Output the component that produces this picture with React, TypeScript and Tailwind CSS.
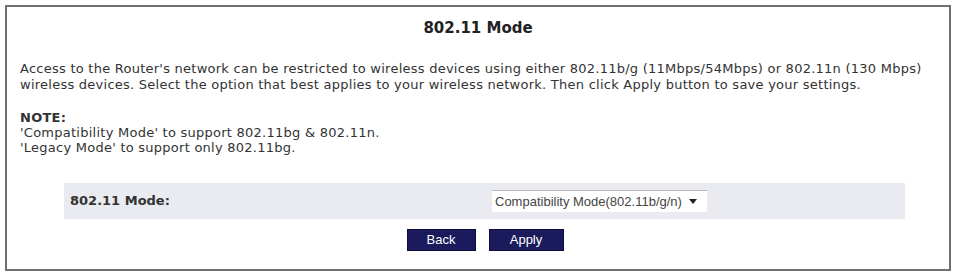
import React from "react";

const Page = () => {
  return (
    <div className="w-[956px] h-[273px] bg-white p-[5px] font-['DejaVu_Sans',Verdana,sans-serif] text-[#333]">
      <div className="h-[266px] border-2 border-[#707070] px-[13px]">
        {/* Title */}
        <h1 className="text-center font-bold text-[15px] leading-[18px] pt-[12px] text-[#222]">
          802.11 Mode
        </h1>

        {/* Description */}
        <p className="mt-[24px] text-[13px] leading-[16px] tracking-[0.25px]">
          Access to the Router's network can be restricted to wireless devices using either 802.11b/g (11Mbps/54Mbps) or 802.11n (130 Mbps)
          wireless devices. Select the option that best applies to your wireless network. Then click Apply button to save your settings.
        </p>

        {/* Note */}
        <div className="mt-[17px] text-[13px] leading-[15px] tracking-[0.25px]">
          <p className="font-bold">NOTE:</p>
          <p>'Compatibility Mode' to support 802.11bg &amp; 802.11n.</p>
          <p>'Legacy Mode' to support only 802.11bg.</p>
        </div>

        {/* Mode row */}
        <div className="mt-[28px] ml-[44px] mr-[31px] h-[36px] bg-[#e9ebf1] flex items-center">
          <span className="w-[428px] pl-[6px] font-bold text-[13px]">802.11 Mode:</span>
          <div className="w-[215px] h-[22px] bg-white border-t border-[#b8b8b8] flex items-center justify-between pl-[3px] pr-[10px] font-['Liberation_Sans',Arial,sans-serif] text-[13px] text-[#444]">
            <span>Compatibility Mode(802.11b/g/n)</span>
            <svg width="8" height="5" viewBox="0 0 8 5">
              <path d="M0 0h8L4 5z" fill="#222" />
            </svg>
          </div>
        </div>

        {/* Buttons */}
        <div className="mt-[10px] flex justify-center gap-[13px] pl-[14px]">
          <button className="w-[69px] h-[22px] bg-[#1b1a5c] text-white text-[13px] font-['Liberation_Sans',Arial,sans-serif] border border-[#0d0c3a]">
            Back
          </button>
          <button className="w-[75px] h-[22px] bg-[#1b1a5c] text-white text-[13px] font-['Liberation_Sans',Arial,sans-serif] border border-[#0d0c3a]">
            Apply
          </button>
        </div>
      </div>
    </div>
  );
};

export default Page;
